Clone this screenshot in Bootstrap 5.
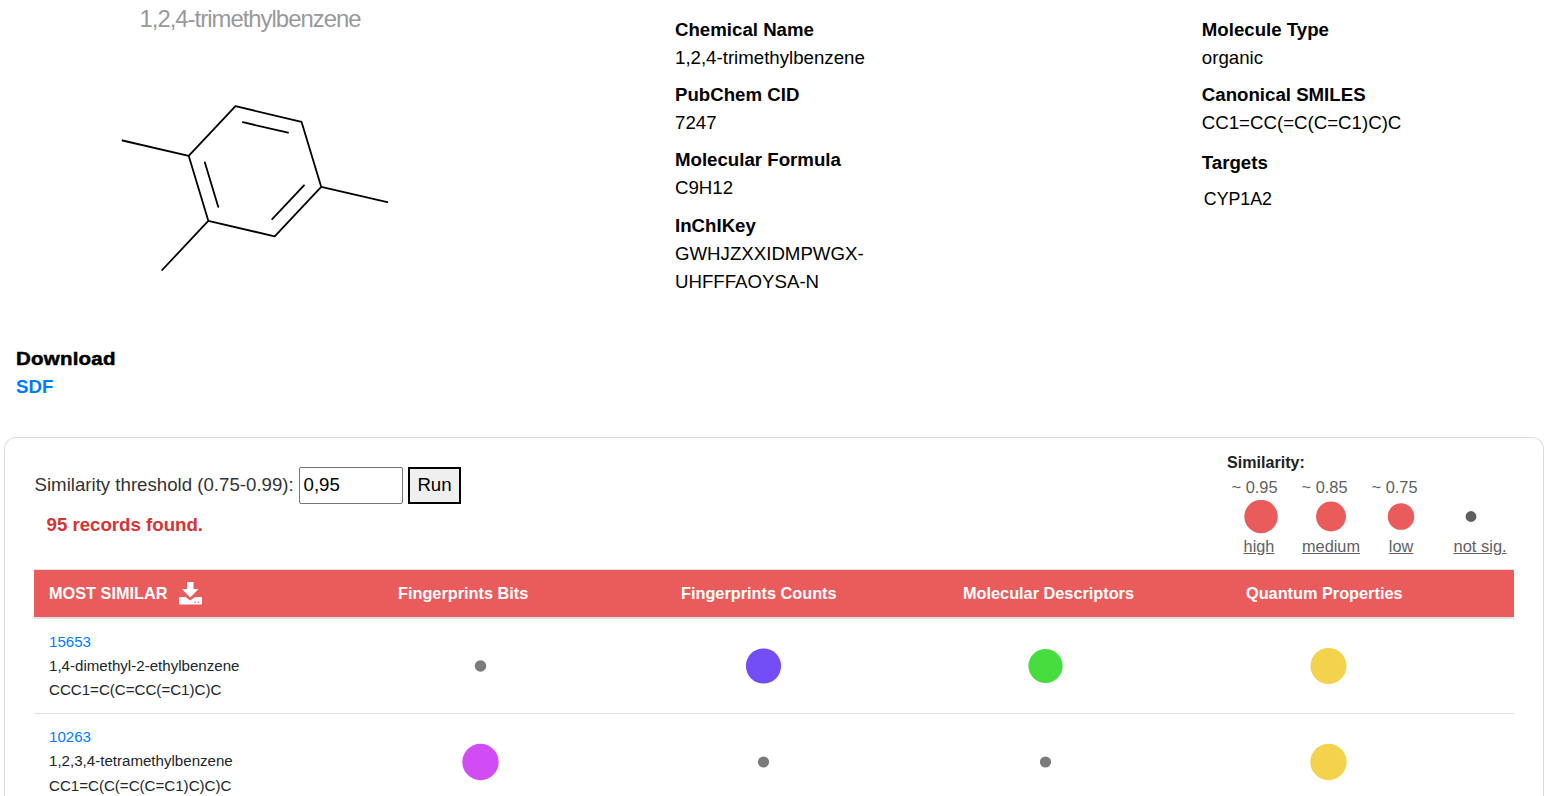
<!DOCTYPE html>
<html lang="en">
<head>
<meta charset="utf-8">
<meta name="viewport" content="width=device-width, initial-scale=1">
<title>1,2,4-trimethylbenzene</title>
<link href="https://cdn.jsdelivr.net/npm/bootstrap@5.3.0/dist/css/bootstrap.min.css" rel="stylesheet">
<style>
body{font-family:"Liberation Sans",Arial,sans-serif;font-size:18.67px;line-height:28px;color:#000;background:#fff;height:796px;overflow:hidden}
a{color:#007bff;text-decoration:none}
.summary{height:343px}
.structure{width:675px}
.facts{width:526.8px;padding-top:16px}
.types{width:300px;padding-top:16px}
.mol-title{font-size:23.9px;letter-spacing:-1px;color:#999;width:500px;line-height:38px}
.mol-svg{display:block}
dl.props dt,dl.props dd{margin:0;line-height:28px}
dl.props dd{margin-bottom:9.2px}
.key-value{width:200px}
dl.props .target-name{font-size:17.8px;padding-left:2px}
.downloads{padding-left:16px;height:94px;padding-top:2px}
.downloads h2{display:block;width:max-content;font-size:18.67px;line-height:28px;letter-spacing:.2px;-webkit-text-stroke:.5px #000;transform:scaleX(1.098);transform-origin:0 50%}
.results{margin-left:4px;width:1540px;height:359px;overflow:hidden;border:1px solid #dcdcdc;border-bottom:0;border-radius:12px 12px 0 0;padding:0 29px}
.tools{height:131px}
.thresh{padding-top:29px;color:#333}
.thresh label{width:265px;padding:0 0 1.5px .5px}
.thresh input{width:104px;height:37px;border:1px solid #767676;border-radius:2px;padding:0 4px 2px 3.5px;color:#000}
.thresh button{width:53px;height:37px;border:2px solid #000;background:#efefef;padding:0 0 2px;color:#000;margin-left:5px}
.found{color:#d63333;padding-left:12.5px;margin-top:7px}
.legend{width:287px;padding-top:12px;font-size:16.1px;color:#5f5f5f}
.legend h3{font-size:16.1px;line-height:25px;color:#222}
.legend-grid{display:grid;grid-template-columns:repeat(4,70px);margin-left:-1px}
.legend-grid>div{line-height:25px;padding-left:5.5px;font-size:16.4px}
.legend-grid svg{display:block;margin:auto}
.legend-grid u{line-height:23px;white-space:nowrap;font-size:16.3px}
.legend-grid .not-sig{padding-left:17.5px}
.legend-grid u.not-sig{font-size:16.5px}
.grid-table{table-layout:fixed;width:1480px;border-collapse:separate;border-spacing:0;font-size:15.1px;line-height:24.4px;color:#212529}
.grid-table th{height:50px;background:#ea5c5c;color:#fff;font-size:16.3px;padding:0 15px;border-top:1px solid #dee2e6;border-bottom:2px solid #dee2e6;white-space:nowrap}
.grid-table td{height:95.4px;padding:0 15px;border-bottom:1px solid #dee2e6;white-space:nowrap;vertical-align:middle}
.save-icon{margin:0 0 2px 11.5px}
.dot{width:165px;height:40px;display:block}
</style>
</head>
<body>
<section class="summary d-flex">
  <div class="structure">
    <div class="mol-title text-center">1,2,4-trimethylbenzene</div>
    <svg class="mol-svg" width="500" height="260" viewBox="0 38 500 260" fill="none" stroke="#000" stroke-width="1.8" stroke-linecap="round" stroke-linejoin="round">
      <path d="M122.5 140.5L188.700 155.800L235.500 106.200L301.500 121.800L321.200 186.800L387.300 202.200M321.200 186.800L274.700 236.400L208.300 220.800L188.700 155.800M208.300 220.800L162.200 270M242.800 122.200L288 132.700M204.800 162.300L218.200 206.800M304 185.300L272.200 219.200"/>
    </svg>
  </div>
  <div class="facts">
    <dl class="props">
      <dt>Chemical Name</dt><dd>1,2,4-trimethylbenzene</dd>
      <dt>PubChem CID</dt><dd>7247</dd>
      <dt>Molecular Formula</dt><dd>C9H12</dd>
      <dt>InChIKey</dt><dd class="key-value">GWHJZXXIDMPWGX-<br>UHFFFAOYSA-N</dd>
    </dl>
  </div>
  <div class="types">
    <dl class="props">
      <dt>Molecule Type</dt><dd>organic</dd>
      <dt>Canonical SMILES</dt><dd class="mb-0">CC1=CC(=C(C=C1)C)C</dd>
      <dt class="mt-2 pt-1">Targets</dt><dd class="mt-2 target-name">CYP1A2</dd>
    </dl>
  </div>
</section>
<section class="downloads">
  <h2 class="fw-bold mb-0">Download</h2>
  <a href="#" class="fw-bold">SDF</a>
</section>
<section class="results">
  <div class="tools d-flex justify-content-between">
    <div class="thresh">
      <div class="d-flex align-items-center">
        <label for="limit">Similarity threshold (0.75-0.99):</label>
        <input id="limit" type="text" value="0,95">
        <button type="button">Run</button>
      </div>
      <div class="found fw-bold">95 records found.</div>
    </div>
    <div class="legend">
      <h3 class="fw-bold mb-0">Similarity:</h3>
      <div class="legend-grid">
        <div>~ 0.95</div><div>~ 0.85</div><div>~ 0.75</div><div></div>
        <svg width="70" height="35" viewBox="-35 -16.5 70 35"><circle r="16.7" fill="#ea5c5c"/></svg>
        <svg width="70" height="35" viewBox="-35 -16.5 70 35"><circle r="15" fill="#ea5c5c"/></svg>
        <svg width="70" height="35" viewBox="-35 -16.5 70 35"><circle r="13.3" fill="#ea5c5c"/></svg>
        <svg width="70" height="35" viewBox="-35 -16.5 70 35"><circle r="5.4" fill="#5f5f5f"/></svg>
        <u class="text-center pe-1">high</u><u class="text-center">medium</u><u class="text-center">low</u><u class="not-sig">not sig.</u>
      </div>
    </div>
  </div>
  <table class="grid-table">
    <colgroup><col style="width:349px"><col style="width:283px"><col style="width:282px"><col style="width:283px"><col style="width:283px"></colgroup>
    <thead>
      <tr>
        <th><span class="d-flex align-items-center">MOST SIMILAR
          <svg class="save-icon" width="23" height="24" viewBox="0 0 23 24"><path fill="#fff" d="M8 1h6.500v7h5l-8.300 8.500L3 8h5zM1 16h5.500l4.700 3.500L16 16H22q1 0 1 1v5.500q0 1-1 1H1q-1 0-1-1V17q0-1 1-1z"/><path fill="#ea5c5c" d="M15.500 20.500h1.300v1.300h-1.300zM18.700 20.500h1.300v1.300h-1.300z"/></svg></span></th>
        <th>Fingerprints Bits</th><th>Fingerprints Counts</th><th>Molecular Descriptors</th><th>Quantum Properties</th>
      </tr>
    </thead>
    <tbody>
      <tr>
        <td><a href="#">15653</a><br>1,4-dimethyl-2-ethylbenzene<br>CCC1=C(C=CC(=C1)C)C</td>
        <td><svg class="dot" viewBox="-82.5 -20 165 40"><circle r="5.8" fill="#7a7c7a"/></svg></td>
        <td><svg class="dot" viewBox="-82.5 -20 165 40"><circle r="17.6" fill="#734df6"/></svg></td>
        <td><svg class="dot" viewBox="-82.5 -20 165 40"><circle r="17.1" fill="#46dd3e"/></svg></td>
        <td><svg class="dot" viewBox="-82.5 -20 165 40"><circle r="18" fill="#f3d34c"/></svg></td>
      </tr>
      <tr>
        <td><a href="#">10263</a><br>1,2,3,4-tetramethylbenzene<br>CC1=C(C(=C(C=C1)C)C)C</td>
        <td><svg class="dot" viewBox="-82.5 -20 165 40"><circle r="18.2" fill="#d04df6"/></svg></td>
        <td><svg class="dot" viewBox="-82.5 -20 165 40"><circle r="5.6" fill="#7a7c7a"/></svg></td>
        <td><svg class="dot" viewBox="-82.5 -20 165 40"><circle r="5.6" fill="#7a7c7a"/></svg></td>
        <td><svg class="dot" viewBox="-82.5 -20 165 40"><circle r="18.2" fill="#f3d34c"/></svg></td>
      </tr>
    </tbody>
  </table>
</section>
<script src="https://cdn.jsdelivr.net/npm/bootstrap@5.3.0/dist/js/bootstrap.bundle.min.js"></script>
</body>
</html>
